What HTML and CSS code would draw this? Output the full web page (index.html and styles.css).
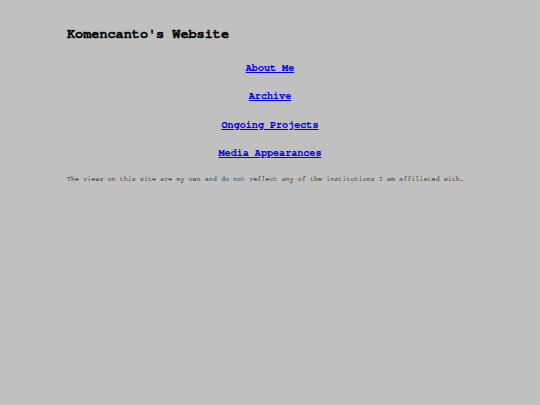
FILE: index.html
```html
<!DOCTYPE html>
<html>
<head>
<meta charset="utf-8">
<link rel="stylesheet" href="styles.css">
</head>
<body>
<div class="page">
  <h1 class="title">Komencanto's Website</h1>
  <nav class="nav">
    <a class="nav-link" href="#">About Me</a>
    <a class="nav-link" href="#">Archive</a>
    <a class="nav-link" href="#">Ongoing Projects</a>
    <a class="nav-link" href="#">Media Appearances</a>
  </nav>
  <p class="note">The views on this site are my own and do not reflect any of the institutions I am affiliated with.</p>
</div>
</body>
</html>
```
FILE: styles.css
```css
html, body {
  margin: 0;
  padding: 0;
  background: #c0c0c0;
  height: 100%;
}
.page {
  padding: 24px 0 0 67px;
  font-family: "FreeMono", "Liberation Mono", "Courier New", monospace;
}
.title {
  margin: 0;
  font-size: 13.5px;
  line-height: 20px;
  font-weight: bold;
  color: #000;
  -webkit-text-stroke: 0.35px #000;
}
.nav {
  display: flex;
  flex-direction: column;
  align-items: center;
  gap: 12.3px;
  margin: 16px 0 0 -67px;
}
.nav-link {
  font-size: 10.1px;
  line-height: 16px;
  font-weight: bold;
  color: #0000ee;
  text-decoration: underline;
  -webkit-text-stroke: 0.15px #0000ee;
}
.note {
  margin: 13px 0 0;
  font-size: 6.75px;
  line-height: 10px;
  color: #3a3a3a;
  -webkit-text-stroke: 0.15px #3a3a3a;
}
```
